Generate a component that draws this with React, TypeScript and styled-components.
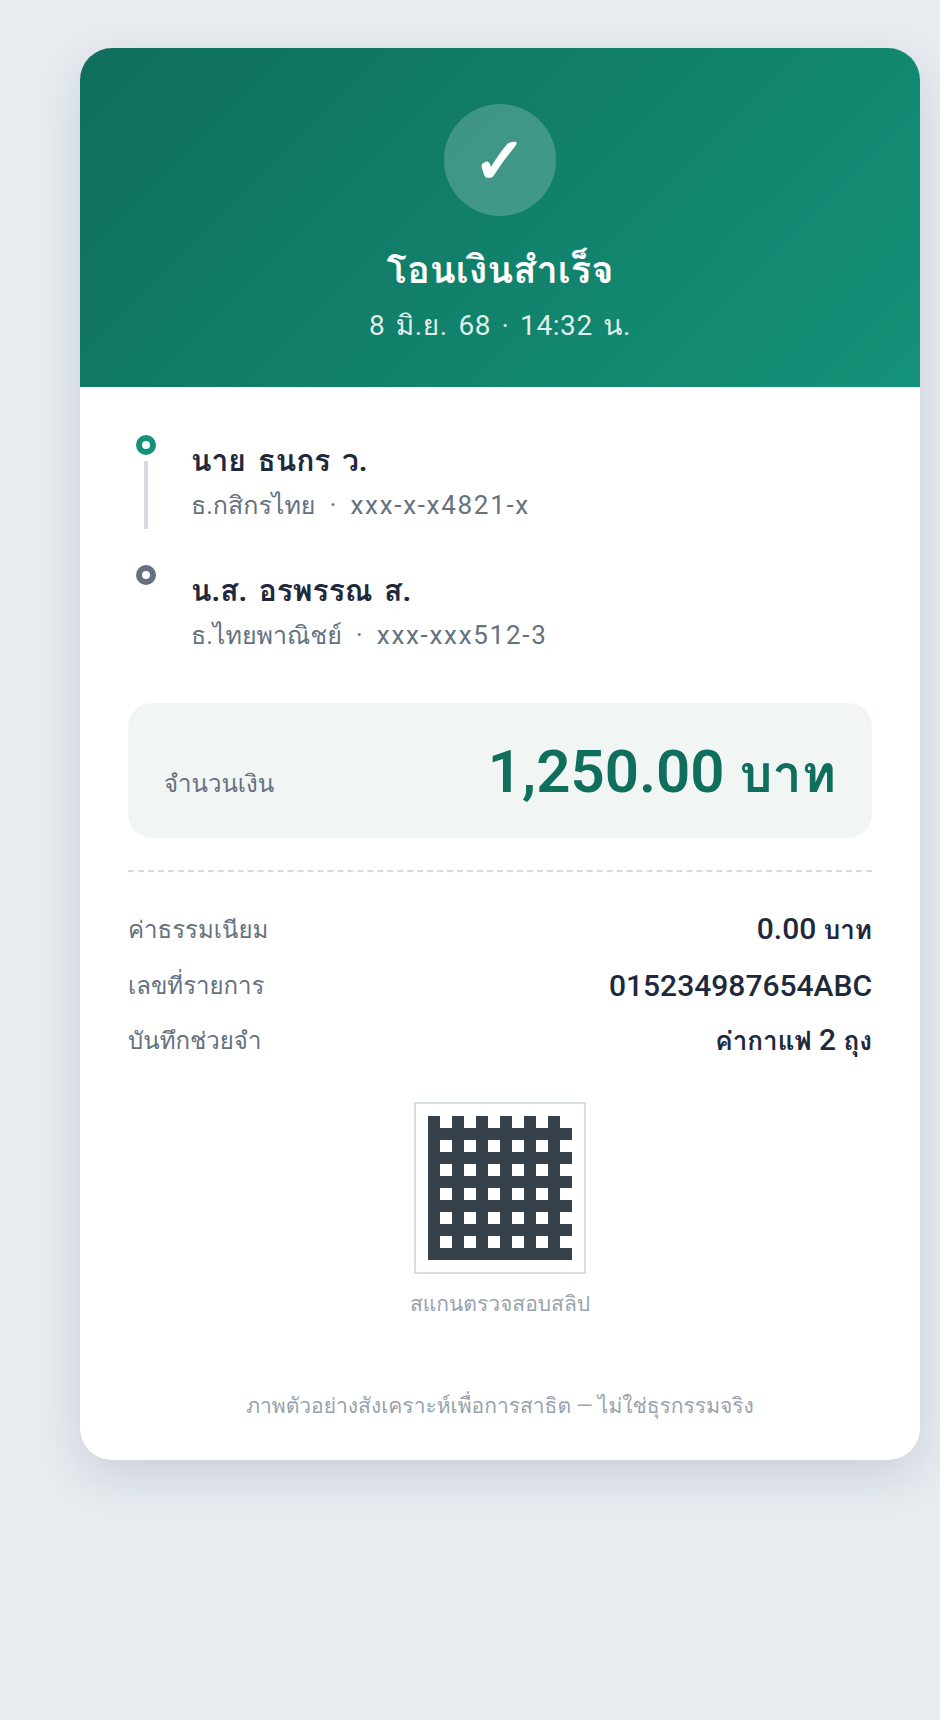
import React from 'react';
import styled, { createGlobalStyle } from 'styled-components';

const GlobalStyle = createGlobalStyle`
    html, body {
        margin: 0;
        padding: 0;
        background: #e8ecf1;
    }
    body {
        font-family: "Roboto", "Loma", sans-serif;
    }
`;

interface Party {
    name: string;
    bank: string;
    account: string;
    active: boolean;
}

const parties: Party[] = [
    { name: 'นาย ธนกร ว.', bank: 'ธ.กสิกรไทย', account: 'xxx-x-x4821-x', active: true },
    { name: 'น.ส. อรพรรณ ส.', bank: 'ธ.ไทยพาณิชย์', account: 'xxx-xxx512-3', active: false },
];

const qrCells = Array.from({ length: 144 }, (_, i) => {
    const row = Math.floor(i / 12);
    const col = i % 12;
    return row % 2 === 1 || col % 2 === 0;
});

export default function App() {
    return (
        <Page>
            <GlobalStyle />
            <Card>
                <Header>
                    <CheckCircle>✓</CheckCircle>
                    <Title>โอนเงินสำเร็จ</Title>
                    <Subtitle>8 มิ.ย. 68 · 14:32 น.</Subtitle>
                </Header>
                <Body>
                    <Parties>
                        {parties.map((p, i) => (
                            <PartyRow key={p.name}>
                                <Track>
                                    <Dot $active={p.active} />
                                    {i === 0 && <Line />}
                                </Track>
                                <PartyInfo>
                                    <PartyName>{p.name}</PartyName>
                                    <PartyAccount>
                                        {p.bank} · <Latin>{p.account}</Latin>
                                    </PartyAccount>
                                </PartyInfo>
                            </PartyRow>
                        ))}
                    </Parties>
                    <AmountBox>
                        <AmountLabel>จำนวนเงิน</AmountLabel>
                        <AmountValue>
                            1,250.00 <AmountUnit>บาท</AmountUnit>
                        </AmountValue>
                    </AmountBox>
                    <Divider />
                    <DetailList>
                        <DetailRow>
                            <DetailLabel>ค่าธรรมเนียม</DetailLabel>
                            <DetailValue>
                                0.00 <DetailUnit>บาท</DetailUnit>
                            </DetailValue>
                        </DetailRow>
                        <DetailRow>
                            <DetailLabel>เลขที่รายการ</DetailLabel>
                            <DetailValue>015234987654ABC</DetailValue>
                        </DetailRow>
                        <DetailRow>
                            <DetailLabel>บันทึกช่วยจำ</DetailLabel>
                            <DetailValue>
                                <DetailUnit>ค่ากาแฟ</DetailUnit> 2 <DetailUnit>ถุง</DetailUnit>
                            </DetailValue>
                        </DetailRow>
                    </DetailList>
                    <QrBlock>
                        <QrFrame>
                            <QrGrid>
                                {qrCells.map((dark, i) => (
                                    <QrCell key={i} $dark={dark} />
                                ))}
                            </QrGrid>
                        </QrFrame>
                        <QrCaption>สแกนตรวจสอบสลิป</QrCaption>
                    </QrBlock>
                    <Footnote>ภาพตัวอย่างสังเคราะห์เพื่อการสาธิต — ไม่ใช่ธุรกรรมจริง</Footnote>
                </Body>
            </Card>
        </Page>
    );
}

const Page = styled.div`
    box-sizing: border-box;
    width: 940px;
    height: 1720px;
    padding: 48px 20px 0 80px;
    background: #e8ecf1;
    overflow: hidden;
`;

const Card = styled.div`
    background: #ffffff;
    border-radius: 32px;
    overflow: hidden;
    box-shadow: 0 16px 48px rgba(15, 40, 60, 0.14);
`;

const Header = styled.div`
    height: 339px;
    box-sizing: border-box;
    padding-top: 56px;
    background: linear-gradient(135deg, #0f6e5c 0%, #149279 100%);
    color: #ffffff;
    display: flex;
    flex-direction: column;
    align-items: center;
`;

const CheckCircle = styled.div`
    width: 112px;
    height: 112px;
    border-radius: 50%;
    background: rgba(255, 255, 255, 0.2);
    display: flex;
    align-items: center;
    justify-content: center;
    font-family: "Loma", sans-serif;
    font-size: 64px;
    font-weight: 700;
    color: #ffffff;
`;

const Title = styled.div`
    margin-top: 26px;
    font-size: 38px;
    line-height: 56px;
    font-weight: 700;
`;

const Subtitle = styled.div`
    margin-top: 8px;
    font-size: 28px;
    line-height: 40px;
    letter-spacing: 0.6px;
    word-spacing: 3px;
    color: rgba(255, 255, 255, 0.88);
`;

const Body = styled.div`
    padding: 48px 48px 0;
`;

const Parties = styled.div`
    display: flex;
    flex-direction: column;
    gap: 28px;
`;

const PartyRow = styled.div`
    display: flex;
    gap: 35px;
    height: 102px;
`;

const Track = styled.div`
    width: 20px;
    margin-left: 8px;
    display: flex;
    flex-direction: column;
    align-items: center;
`;

const Dot = styled.div<{ $active: boolean }>`
    box-sizing: border-box;
    width: 20px;
    height: 20px;
    border-radius: 50%;
    background: #ffffff;
    border: 6px solid ${(p) => (p.$active ? '#149279' : '#64717f')};
`;

const Line = styled.div`
    width: 4px;
    height: 68px;
    margin-top: 6px;
    background: #d3dae3;
`;

const PartyInfo = styled.div`
    display: flex;
    flex-direction: column;
    padding-top: 4px;
`;

const PartyName = styled.div`
    font-size: 30px;
    line-height: 44px;
    font-weight: 700;
    word-spacing: 4px;
    color: #1e293b;
`;

const PartyAccount = styled.div`
    margin-top: 2px;
    font-size: 25px;
    line-height: 40px;
    word-spacing: 8px;
    color: #64717f;
`;

const Latin = styled.span`
    font-size: 26px;
    letter-spacing: 1.7px;
`;

const AmountBox = styled.div`
    margin-top: 36px;
    height: 135px;
    box-sizing: border-box;
    padding: 0 36px;
    border-radius: 24px;
    background: #f1f5f4;
    display: flex;
    align-items: baseline;
    justify-content: space-between;
    line-height: 137px;
`;

const AmountLabel = styled.div`
    font-size: 24px;
    color: #64717f;
`;

const AmountValue = styled.div`
    font-size: 60px;
    font-weight: 600;
    color: #0f6e5c;
`;

const AmountUnit = styled.span`
    font-size: 52px;
    font-weight: 700;
`;

const Divider = styled.div`
    margin-top: 32px;
    border-top: 2px dashed #d3dae3;
`;

const DetailList = styled.div`
    margin-top: 30px;
    display: flex;
    flex-direction: column;
`;

const DetailRow = styled.div`
    display: flex;
    justify-content: space-between;
    align-items: center;
    height: 55.5px;
`;

const DetailLabel = styled.div`
    font-size: 24px;
    color: #64717f;
`;

const DetailValue = styled.div`
    font-size: 30px;
    font-weight: 500;
    color: #1e293b;
`;

const DetailUnit = styled.span`
    font-size: 26px;
    font-weight: 700;
`;

const QrBlock = styled.div`
    margin-top: 33px;
    display: flex;
    flex-direction: column;
    align-items: center;
`;

const QrFrame = styled.div`
    box-sizing: border-box;
    width: 172px;
    height: 172px;
    padding: 12px;
    border: 2px solid #d9dee4;
    background: #ffffff;
`;

const QrGrid = styled.div`
    display: grid;
    grid-template-columns: repeat(12, 12px);
    grid-auto-rows: 12px;
`;

const QrCell = styled.div<{ $dark: boolean }>`
    background: ${(p) => (p.$dark ? '#36414b' : '#ffffff')};
`;

const QrCaption = styled.div`
    margin-top: 12px;
    font-size: 21px;
    line-height: 36px;
    color: #98a2ae;
`;

const Footnote = styled.div`
    margin-top: 66px;
    padding-bottom: 36px;
    text-align: center;
    font-size: 21px;
    line-height: 36px;
    color: #98a2ae;
`;
